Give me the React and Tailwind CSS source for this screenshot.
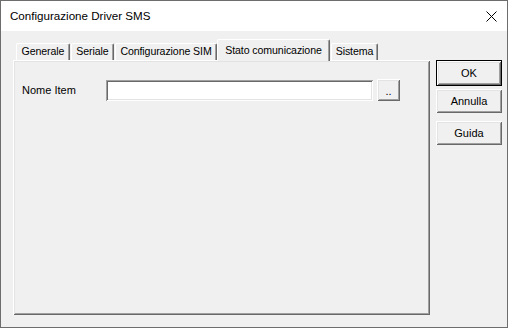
import React from "react";

const raised =
  "shadow-[inset_1px_1px_0_#ffffff,inset_-1px_-1px_0_#696969,inset_2px_2px_0_#e3e3e3,inset_-2px_-2px_0_#a0a0a0]";

function Tab({ label, w, ml, selected }) {
  if (selected) {
    return (
      <div
        className="relative z-10 -mb-px flex h-[22px] items-start justify-center bg-[#f0f0f0] pt-[3px] border-t border-l border-white border-r border-r-[#696969] shadow-[inset_-1px_0_0_#a0a0a0] rounded-t-[2px] whitespace-nowrap"
        style={{ width: w, marginLeft: ml }}
      >
        {label}
      </div>
    );
  }
  return (
    <div
      className="flex h-[17px] items-center justify-center bg-[#f0f0f0] border-t border-l border-white border-r border-r-[#696969] shadow-[inset_-1px_0_0_#a0a0a0] rounded-t-[2px] whitespace-nowrap"
      style={{ width: w, marginLeft: ml }}
    >
      {label}
    </div>
  );
}

function Btn({ children, def, className = "" }) {
  return (
    <div
      className={`flex w-[66px] items-center justify-center bg-[#f0f0f0] ${
        def ? "h-[26px] border border-black" : "h-[24px]"
      } ${className}`}
    >
      <div className={`flex h-full w-full items-center justify-center ${raised}`}>
        {children}
      </div>
    </div>
  );
}

export default function App() {
  return (
    <div
      className="flex h-[328px] w-[508px] flex-col border border-[#6d6d6d] bg-[#f0f0f0] text-[11px] text-black"
      style={{ fontFamily: '"Liberation Sans", Arial, sans-serif' }}
    >
      <div className="flex h-[30px] items-center justify-between bg-white pl-[9px] pr-[10px]">
        <span className="text-[11.6px]">Configurazione Driver SMS</span>
        <svg width="11" height="11" viewBox="0 0 11 11">
          <path d="M0.5 0.5 L10.5 10.5 M10.5 0.5 L0.5 10.5" stroke="#000" strokeWidth="1" />
        </svg>
      </div>
      <div className="flex pl-[12px] pt-[8px]">
        <div className="flex flex-col">
          <div className="flex h-[21px] items-end text-[10.6px] tracking-[-0.1px]">
            <Tab label="Generale" w={54} ml={3} />
            <Tab label="Seriale" w={43} ml={1} />
            <Tab label="Configurazione SIM" w={102} ml={1} />
            <Tab label="Stato comunicazione" w={113} ml={0} selected />
            <Tab label="Sistema" w={47} ml={1} />
          </div>
          <div className={`flex h-[255px] w-[417px] flex-col ${raised}`}>
            <div className="mt-[19px] flex items-center">
              <span className="ml-[9px] w-[84px]">Nome Item</span>
              <div className="mt-px h-[21px] w-[267px] bg-white shadow-[inset_1px_1px_0_#a0a0a0,inset_-1px_-1px_0_#ffffff,inset_2px_2px_0_#696969,inset_-2px_-2px_0_#e3e3e3]" />
              <div className={`ml-[4px] flex h-[22px] w-[23px] items-end justify-center pb-[4px] leading-none ${raised}`}>
                ..
              </div>
            </div>
          </div>
        </div>
        <div className="ml-[6px] mt-[21px] flex flex-col">
          <Btn def>OK</Btn>
          <Btn className="mt-[3px]">Annulla</Btn>
          <Btn className="mt-[8px]">Guida</Btn>
        </div>
      </div>
    </div>
  );
}
